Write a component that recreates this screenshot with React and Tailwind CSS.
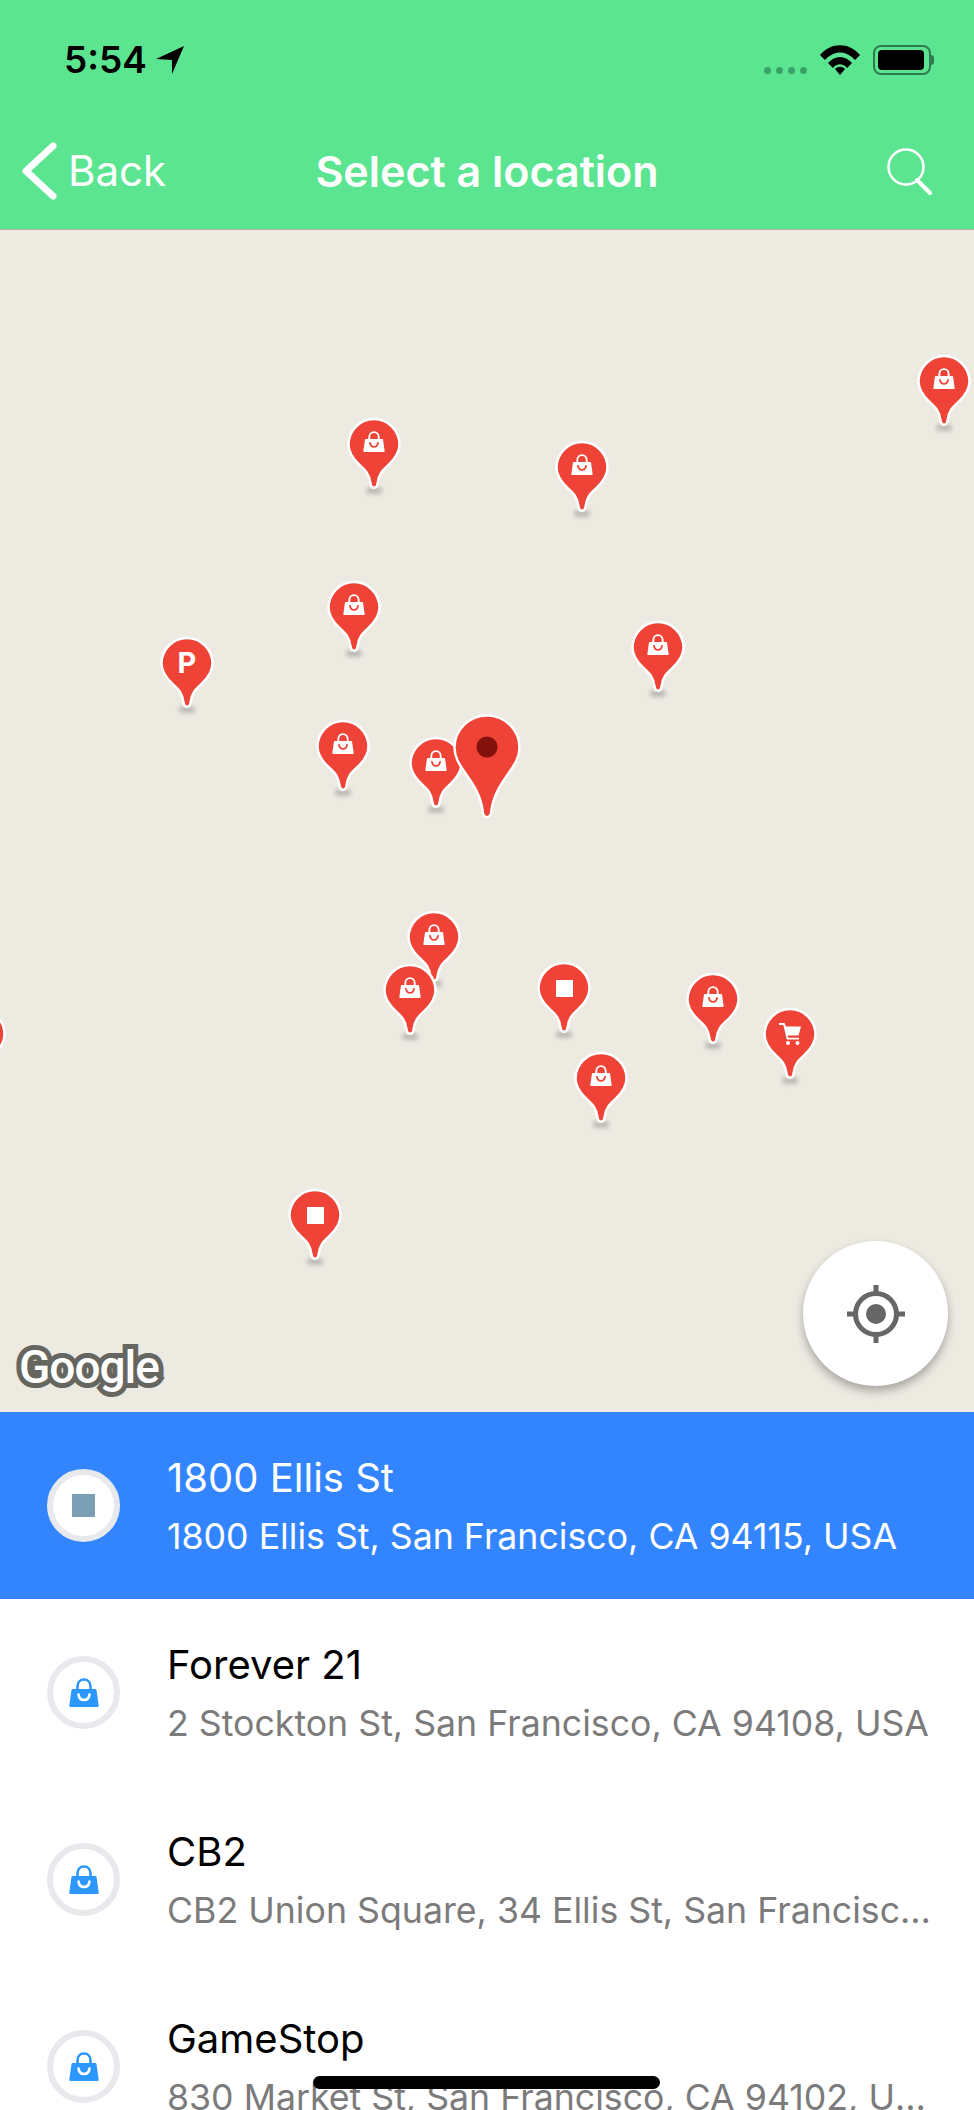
import React from "react";

const pins = [
  { pos: "left-[917px] top-[124px]", icon: "bag" },
  { pos: "left-[347px] top-[187px]", icon: "bag" },
  { pos: "left-[555px] top-[210px]", icon: "bag" },
  { pos: "left-[327px] top-[350px]", icon: "bag" },
  { pos: "left-[631px] top-[390px]", icon: "bag" },
  { pos: "left-[160px] top-[406px]", icon: "p" },
  { pos: "left-[316px] top-[489px]", icon: "bag" },
  { pos: "left-[409px] top-[506px]", icon: "bag" },
  { pos: "left-[407px] top-[680px]", icon: "bag" },
  { pos: "left-[383px] top-[733px]", icon: "bag" },
  { pos: "left-[537px] top-[731px]", icon: "square" },
  { pos: "left-[686px] top-[742px]", icon: "bag" },
  { pos: "left-[763px] top-[777px]", icon: "cart" },
  { pos: "left-[574px] top-[821px]", icon: "bag" },
  { pos: "left-[288px] top-[958px]", icon: "square" },
  { pos: "left-[-48px] top-[777px]", icon: "bag" },
];

const places = [
  { name: "1800 Ellis St", address: "1800 Ellis St, San Francisco, CA 94115, USA", active: true },
  { name: "Forever 21", address: "2 Stockton St, San Francisco, CA 94108, USA" },
  { name: "CB2", address: "CB2 Union Square, 34 Ellis St, San Francisco, CA 94108, USA" },
  { name: "GameStop", address: "830 Market St, San Francisco, CA 94102, USA" },
];

function BagIcon({ color, smile, className }) {
  return (
    <svg viewBox="0 0 30 29" className={className}>
      <path d="M8.5 12V8.5C8.5 4.5 11 1.5 15 1.5S21.500 4.500 21.500 8.500V12" fill="none" stroke={color} strokeWidth="2.600" />
      <path d="M3.500 11H26.500C27 11 27.400 11.300 27.500 12L29.700 27.500C29.800 28.400 29.300 29 28.500 29H1.500C.7 29 .2 28.400 .3 27.500L2.500 12C2.600 11.300 3 11 3.500 11Z" fill={color} />
      <path d="M9.500 16.500C10 20 12 22 15 22S20 20 20.500 16.500" fill="none" stroke={smile} strokeWidth="2.600" strokeLinecap="round" />
    </svg>
  );
}

function CartIcon() {
  return (
    <svg viewBox="0 0 22 22" className="h-[22px] w-[22px]">
      <path d="M0 0H5.500L7 3.500H22L19.500 12.500H8.700L9.300 14.700H20V16.500H7.800L4.300 2H0Z" fill="#fff" />
      <circle cx="9" cy="20" r="2" fill="#fff" />
      <circle cx="18.500" cy="20" r="2" fill="#fff" />
    </svg>
  );
}

function Pin({ pos, icon }) {
  return (
    <div className={`absolute h-[73px] w-[54px] ${pos}`}>
      <div className="absolute bottom-[-4px] left-[19px] h-[7px] w-[16px] rounded-full bg-black/20 blur-[2px]" />
      <svg viewBox="0 0 54 72" className="absolute inset-0 h-full w-full">
        <path
          d="M27 1.500C13 1.500 1.500 13 1.500 27C1.500 36 6.500 42 13 48C18.500 53 22.500 57 23.500 66C24 71.500 30 71.500 30.500 66C31.500 57 35.500 53 41 48C47.500 42 52.500 36 52.500 27C52.500 13 41 1.500 27 1.500Z"
          fill="#ee4336"
          stroke="#fff"
          strokeWidth="2.500"
        />
      </svg>
      {icon === "bag" && <BagIcon color="#fff" smile="#ee4336" className="absolute left-[16px] top-[14px] h-[21px] w-[22px]" />}
      {icon === "square" && <div className="absolute left-[19px] top-[19px] h-[17px] w-[17px] bg-white" />}
      {icon === "cart" && <div className="absolute left-[16px] top-[16px] flex"><CartIcon /></div>}
      {icon === "p" && <div className="absolute inset-x-0 top-[9px] text-center text-[29px] leading-[36px] font-bold text-white">P</div>}
    </div>
  );
}

function BigPin() {
  return (
    <svg viewBox="0 0 68 106" className="absolute left-[453px] top-[484px] h-[106px] w-[68px]">
      <path
        d="M34 1.500C16 1.500 1.500 16 1.500 33.500C1.500 43 6 50 11.500 58C20 70 27.500 81 29.500 96C30.300 105.500 37.700 105.500 38.500 96C40.500 81 48 70 56.500 58C62 50 66.500 43 66.500 33.500C66.500 16 52 1.500 34 1.500Z"
        fill="#ee4336"
        stroke="#fff"
        strokeWidth="2.500"
      />
      <circle cx="34" cy="33" r="10.500" fill="#85110d" />
    </svg>
  );
}

function PlaceRow({ name, address, active }) {
  return (
    <div className={`flex h-[187px] shrink-0 items-center pl-[47px] pr-[42px] ${active ? "bg-[#3385ff]" : "bg-white"}`}>
      <div className="flex h-[73px] w-[73px] shrink-0 items-center justify-center rounded-full border-[6px] border-[#e8e9ed] bg-white">
        {active ? (
          <div className="h-[23px] w-[23px] bg-[#7a9fb5]" />
        ) : (
          <BagIcon color="#2b97ff" smile="#fff" className="h-[29px] w-[30px]" />
        )}
      </div>
      <div className="ml-[47px] min-w-0 flex-1">
        <div className={`text-[40px] leading-[48px] ${active ? "text-white" : "text-black"}`}>{name}</div>
        <div className={`mt-[12px] truncate text-[35.700px] leading-[44px] ${active ? "text-white" : "text-[#7b7b7b]"}`}>{address}</div>
      </div>
    </div>
  );
}

export default function App() {
  return (
    <div className="relative flex h-[2110px] w-[974px] flex-col overflow-hidden bg-white font-['Inter',sans-serif]">
      <header className="h-[230px] shrink-0 border-b border-b-[#b5b5b0] bg-[#5ce591] text-white">
        <div className="flex h-[122px] items-start justify-between pl-[64px] pr-[40px] pt-[40px]">
          <div className="flex items-center gap-[9px] text-black">
            <span className="text-[37px] leading-[40px] font-semibold">5:54</span>
            <svg viewBox="0 0 28 28" className="h-[28px] w-[28px]">
              <path d="M28 0L0 13L16 14L16 28Z" fill="#000" />
            </svg>
          </div>
          <div className="flex items-center pt-[5px]">
            <div className="mr-[13px] mt-[21px] flex gap-[5px]">
              <span className="h-[7px] w-[7px] rounded-full bg-[#3aa269]" />
              <span className="h-[7px] w-[7px] rounded-full bg-[#3aa269]" />
              <span className="h-[7px] w-[7px] rounded-full bg-[#3aa269]" />
              <span className="h-[7px] w-[7px] rounded-full bg-[#3aa269]" />
            </div>
            <svg viewBox="0 0 40 30" className="mr-[13px] h-[30px] w-[40px]">
              <path d="M0 10C11 -3 29 -3 40 10L35 15C26 5 14 5 5 15Z" fill="#000" />
              <path d="M8 18C15 10 25 10 32 18L27 23C23 18 17 18 13 23Z" fill="#000" />
              <path d="M15 24C18 21 22 21 25 24L20 30Z" fill="#000" />
            </svg>
            <div className="flex items-center">
              <div className="h-[30px] w-[58px] rounded-[8px] border-[2px] border-[#2f7a50] p-[3px]">
                <div className="h-full w-[46px] rounded-[4px] bg-black" />
              </div>
              <div className="h-[10px] w-[3px] rounded-r-full bg-[#2f7a50]" />
            </div>
          </div>
        </div>
        <div className="grid h-[98px] grid-cols-[1fr_auto_1fr] items-center px-[40px]">
          <div className="ml-[-20px] flex items-center">
            <svg viewBox="0 0 38 58" className="h-[58px] w-[38px]">
              <path d="M33 4L6 29L33 54" fill="none" stroke="#fff" strokeWidth="7" strokeLinecap="round" strokeLinejoin="round" />
            </svg>
            <span className="ml-[10px] text-[42px] leading-[48px]">Back</span>
          </div>
          <div className="text-[43px] leading-[48px] font-semibold whitespace-nowrap">Select a location</div>
          <svg viewBox="0 0 48 48" className="h-[48px] w-[48px] justify-self-end">
            <circle cx="20" cy="20" r="17.500" fill="none" stroke="#fff" strokeWidth="2.500" />
            <path d="M31 33L44 46" fill="none" stroke="#fff" strokeWidth="4" strokeLinecap="round" />
          </svg>
        </div>
      </header>

      <div className="relative h-[1182px] shrink-0 overflow-hidden bg-[#edeae2]">
        {pins.map((pin) => (
          <Pin key={pin.pos} pos={pin.pos} icon={pin.icon} />
        ))}
        <BigPin />
        <div className="absolute left-[19px] top-[1109px] font-['Roboto',sans-serif] text-[46px] leading-[56px] font-medium tracking-[-1px] text-white [paint-order:stroke_fill] [-webkit-text-stroke:10px_#666660]">
          Google
        </div>
        <button className="absolute left-[803px] top-[1011px] flex h-[145px] w-[145px] items-center justify-center rounded-full bg-white shadow-[0_5px_10px_rgba(0,0,0,0.3)]">
          <svg viewBox="0 0 58 58" className="h-[58px] w-[58px]">
            <circle cx="29" cy="29" r="20.500" fill="none" stroke="#666" strokeWidth="5" />
            <circle cx="29" cy="29" r="10" fill="#666" />
            <path d="M29 0V9M29 49V58M0 29H9M49 29H58" stroke="#666" strokeWidth="5" />
          </svg>
        </button>
      </div>

      {places.map((place) => (
        <PlaceRow key={place.name} {...place} />
      ))}

      <div className="absolute bottom-[21px] left-[313px] h-[13px] w-[347px] rounded-full bg-black" />
    </div>
  );
}
